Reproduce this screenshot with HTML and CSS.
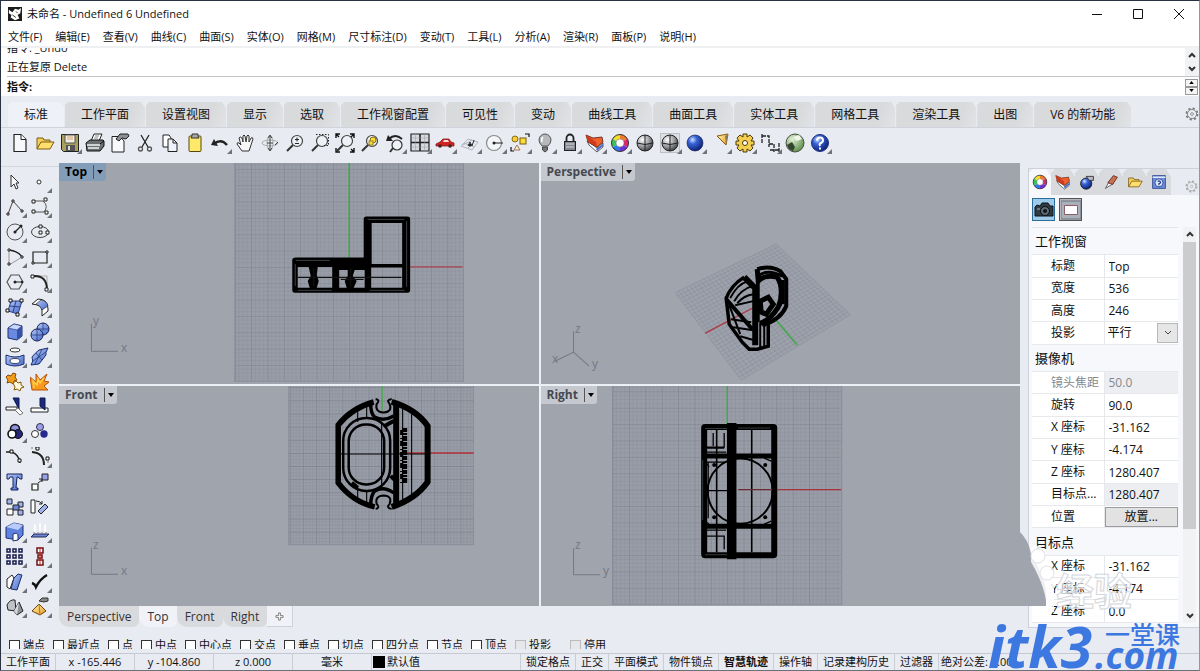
FILE: index.html
```html
<!DOCTYPE html>
<html lang="zh-CN">
<head>
    <meta charset="UTF-8">
    <meta name="viewport" content="width=device-width, initial-scale=1.0">
    <title>未命名 - Undefined 6 Undefined</title>
    <link rel="stylesheet" href="styles.css">
</head>
<body>
    <!-- shared gradients and grid patterns -->
    <svg class="defs" width="0" height="0" aria-hidden="true">
        <defs>
            <radialGradient id="blueBall" cx="35%" cy="30%" r="75%"><stop offset="0" stop-color="#cfe0ff"/><stop offset=".35" stop-color="#3763d6"/><stop offset="1" stop-color="#0b1c6e"/></radialGradient>
            <radialGradient id="grayBall" cx="35%" cy="30%" r="75%"><stop offset="0" stop-color="#fff"/><stop offset=".5" stop-color="#a4a6aa"/><stop offset="1" stop-color="#3c3e42"/></radialGradient>
            <radialGradient id="greenBall" cx="35%" cy="30%" r="75%"><stop offset="0" stop-color="#e2f0d8"/><stop offset="1" stop-color="#5d8c4a"/></radialGradient>
            <linearGradient id="blueFace" x1="0" y1="0" x2="1" y2="1"><stop offset="0" stop-color="#b5c8f6"/><stop offset="1" stop-color="#4468c8"/></linearGradient>
            <linearGradient id="gold" x1="0" y1="0" x2="1" y2="1"><stop offset="0" stop-color="#fff3b0"/><stop offset="1" stop-color="#e89a1c"/></linearGradient>
            <pattern id="gridBig" x="349.5" y="267" width="16.36" height="16.36" patternUnits="userSpaceOnUse">
                <path d="M4.1 0V16.4M8.2 0V16.4M12.3 0V16.4M0 4.1H16.4M0 8.2H16.4M0 12.3H16.4" stroke="#8b8f9a" stroke-width=".6"/>
                <path d="M0 0V16.4M0 0H16.4" stroke="#7b808c" stroke-width="1.2"/>
            </pattern>
            <pattern id="gridRight" x="727" y="489.5" width="16.36" height="16.36" patternUnits="userSpaceOnUse">
                <path d="M4.1 0V16.4M8.2 0V16.4M12.3 0V16.4M0 4.1H16.4M0 8.2H16.4M0 12.3H16.4" stroke="#8b8f9a" stroke-width=".6"/>
                <path d="M0 0V16.4M0 0H16.4" stroke="#7b808c" stroke-width="1.2"/>
            </pattern>
            <pattern id="gridFront" x="382" y="453" width="13.14" height="13.14" patternUnits="userSpaceOnUse">
                <path d="M3.3 0V13.2M6.6 0V13.2M9.9 0V13.2M0 3.3H13.2M0 6.6H13.2M0 9.9H13.2" stroke="#8b8f9a" stroke-width=".6"/>
                <path d="M0 0V13.2M0 0H13.2" stroke="#7b808c" stroke-width="1.2"/>
            </pattern>
            <symbol id="wheel" viewBox="0 0 20 20">
                <g fill="none" stroke-width="5">
                    <path d="M10 4A6 6 0 0 1 15.2 7" stroke="#f07a2a"/><path d="M15.2 7A6 6 0 0 1 15.2 13" stroke="#d82a6a"/>
                    <path d="M15.2 13A6 6 0 0 1 10 16" stroke="#7030d8"/><path d="M10 16A6 6 0 0 1 4.800 13" stroke="#2a7ae8"/>
                    <path d="M4.800 13A6 6 0 0 1 4.800 7" stroke="#3cc45c"/><path d="M4.800 7A6 6 0 0 1 10 4" stroke="#f2dc2c"/>
                </g>
                <circle cx="10" cy="10" r="8.5" fill="none" stroke="#333"/><circle cx="10" cy="10" r="4" fill="#fff" stroke="#666" stroke-width=".5"/>
            </symbol>
            <symbol id="layers" viewBox="0 0 20 20">
                <path d="M2 8L12 15 18 10V14L12 19 4 12Z" fill="#fff" stroke="#333" stroke-width=".8"/>
                <path d="M11 16L18 11V13L12 18Z" fill="#4a68c8"/>
                <path d="M1 2L8 5 17 4 18 9 12 14 3 9Z" fill="#f0602a" stroke="#5b1a10" stroke-width=".8"/>
                <path d="M1 2L3 9 12 14 11 9Z" fill="#cf3a1c"/>
            </symbol>
            <symbol id="folder" viewBox="0 0 20 20">
                <path d="M2 16V5H8L9 7H15V9" fill="#f4cf58" stroke="#7a5a10"/><path d="M2 16L6 9H19L15 16Z" fill="#ffdf6e" stroke="#7a5a10"/>
            </symbol>
            <symbol id="cog" viewBox="0 0 20 20">
                <circle cx="10" cy="10" r="8" fill="none" stroke-width="2.4" stroke-dasharray="3.14"/><circle cx="10" cy="10" r="6.5" fill="none" stroke-width="1.2"/><circle cx="10" cy="10" r="2" fill="none"/>
            </symbol>
            <symbol id="lens" viewBox="0 0 20 20">
                <path d="M8 12L2 18" stroke="#333" stroke-width="2"/><circle cx="12" cy="8" r="5.5" fill="#eef2f7" stroke="#444" stroke-width="1.2"/>
            </symbol>
        </defs>
    </svg>

    <header class="titlebar">
        <svg class="logo" viewBox="0 0 16 16"><path d="M0 0H16V16H0Z" fill="#1c1c1c"/><path d="M1 3L5 6 8 2 12 3 15 1 14 7 11 9 13 13 8 15 3 12 4 9 1 7Z" fill="#fff"/><path d="M5 9L9 12M9 5L11 7M3 13L5 15" stroke="#222"/></svg>
        <h1>未命名 - Undefined 6 Undefined</h1>
        <div class="window-buttons">
            <button aria-label="最小化"><svg viewBox="0 0 12 12"><path d="M1 6.5H11"/></svg></button>
            <button aria-label="最大化"><svg viewBox="0 0 12 12"><path d="M1.5 1.5H10.5V10.5H1.5Z"/></svg></button>
            <button aria-label="关闭"><svg viewBox="0 0 12 12"><path d="M1 1L11 11M11 1L1 11"/></svg></button>
        </div>
    </header>

    <nav class="menu">
        <a href="#">文件(F)</a>
        <a href="#">编辑(E)</a>
        <a href="#">查看(V)</a>
        <a href="#">曲线(C)</a>
        <a href="#">曲面(S)</a>
        <a href="#">实体(O)</a>
        <a href="#">网格(M)</a>
        <a href="#">尺寸标注(D)</a>
        <a href="#">变动(T)</a>
        <a href="#">工具(L)</a>
        <a href="#">分析(A)</a>
        <a href="#">渲染(R)</a>
        <a href="#">面板(P)</a>
        <a href="#">说明(H)</a>
    </nav>

    <section class="command">
        <div class="history">
            <div class="history-lines">
                <p>指令: _Undo</p>
                <p>正在复原 Delete</p>
            </div>
            <div class="history-scroll">
                <svg viewBox="0 0 8 6"><path d="M1 5L4 2 7 5"/></svg>
                <svg viewBox="0 0 8 6"><path d="M1 1L4 4 7 1"/></svg>
            </div>
        </div>
        <div class="prompt">
            <label for="cmd">指令:</label>
            <input type="text" id="cmd">
            <div class="spin">
                <button aria-label="上一个"><svg viewBox="0 0 6 4"><path d="M0 4L3 0 6 4Z"/></svg></button>
                <button aria-label="下一个"><svg viewBox="0 0 6 4"><path d="M0 0L3 4 6 0Z"/></svg></button>
            </div>
        </div>
    </section>

    <nav class="tabs">
        <button class="tab active">标准</button>
        <button class="tab">工作平面</button>
        <button class="tab">设置视图</button>
        <button class="tab">显示</button>
        <button class="tab">选取</button>
        <button class="tab">工作视窗配置</button>
        <button class="tab">可见性</button>
        <button class="tab">变动</button>
        <button class="tab">曲线工具</button>
        <button class="tab">曲面工具</button>
        <button class="tab">实体工具</button>
        <button class="tab">网格工具</button>
        <button class="tab">渲染工具</button>
        <button class="tab">出图</button>
        <button class="tab">V6 的新功能</button>
        <svg class="tabs-cog" viewBox="0 0 20 20"><use href="#cog"/></svg>
    </nav>

    <div class="toolbar">
        <button class="tool" aria-label="新建"><svg viewBox="0 0 20 20"><path d="M4 1.5H11L16 6.5V18.5H4Z" fill="#f6f8fb" stroke="#222" stroke-width="1.2"/><path d="M11 1.5V6.5H16" fill="#fff" stroke="#222"/></svg></button>
        <button class="tool" aria-label="打开"><svg viewBox="0 0 20 20"><use href="#folder"/></svg></button>
        <button class="tool more" aria-label="保存"><svg viewBox="0 0 20 20"><path d="M1.5 1.5H18.5V18.5H3.5L1.5 16.5Z" fill="#a9a05c" stroke="#222"/><path d="M5 2H15V10H5Z" fill="#f1efe6" stroke="#555"/><path d="M7 4H13M7 6H13" stroke="#e0a070"/><path d="M6 12H15V18H6Z" fill="#555"/><path d="M8 13H10V17H8Z" fill="#ddd"/></svg></button>
        <button class="tool" aria-label="打印"><svg viewBox="0 0 20 20"><path d="M6 8L9 1H17L14 8" fill="#fff" stroke="#222"/><path d="M10 3H14M9 5H13" stroke="#888"/><path d="M1 10L5 7H18L19 8V13L15 18H2Z" fill="#6b6e73" stroke="#111"/><path d="M2 12H15M3 15H14" stroke="#f4f4f4" stroke-width="1.4"/><path d="M15 11L19 8" stroke="#111"/></svg></button>
        <button class="tool" aria-label="文件属性"><svg viewBox="0 0 20 20"><path d="M2 3.5H10L14 8V19H2Z" fill="#f8f9fb" stroke="#222"/><path d="M6 6L10 1H18L19 3 16 6 12 5 9 8Z" fill="#8b8e92" stroke="#222"/></svg></button>
        <button class="tool" aria-label="剪切"><svg viewBox="0 0 20 20"><path d="M6 2L13 14M14 2L7 14" stroke="#222" stroke-width="1.3"/><circle cx="5.5" cy="16" r="2" fill="none" stroke="#555" stroke-width="1.3"/><circle cx="14.5" cy="16" r="2" fill="none" stroke="#555" stroke-width="1.3"/></svg></button>
        <button class="tool" aria-label="复制"><svg viewBox="0 0 20 20"><path d="M3 2H9L11 5V14H3Z" fill="#fff" stroke="#222"/><path d="M8 6H13L17 10V18.5H8Z" fill="#eef2fa" stroke="#222"/><path d="M13 6V10H17" fill="none" stroke="#222"/></svg></button>
        <button class="tool" aria-label="粘贴"><svg viewBox="0 0 20 20"><rect x="4" y="3" width="12" height="15.5" rx="1" fill="#ffe96a" stroke="#55480f"/><path d="M7 3V1H13V3L14 5H6Z" fill="#aaa" stroke="#333"/></svg></button>
        <button class="tool more" aria-label="复原"><svg viewBox="0 0 20 20"><path d="M4 11Q11 5 17 12" fill="none" stroke="#222" stroke-width="2.4"/><path d="M1 12L4 6 8 13Z" fill="#222"/></svg></button>
        <button class="tool" aria-label="平移"><svg viewBox="0 0 20 20"><path d="M7 18L2 11Q2 9 4 10L6 12 4 5Q5 3 7 5L8 9 8 3Q9 1 10 3L11 9 12 3Q13 1 14 3L14 9 16 5Q18 4 18 6L15 15 14 18Z" fill="#f7f7f8" stroke="#333"/></svg></button>
        <button class="tool" aria-label="旋转视图"><svg viewBox="0 0 20 20"><ellipse cx="10" cy="10" rx="8" ry="3" fill="none" stroke="#aaa"/><ellipse cx="10" cy="10" rx="3" ry="7" fill="none" stroke="#aaa"/><path d="M10 3V17M8 5L10 2 12 5M8 15L10 18 12 15M15 12L18 9M7 10H13" fill="none" stroke="#444"/></svg></button>
        <button class="tool" aria-label="动态缩放"><svg viewBox="0 0 20 20"><use href="#lens"/><path d="M12 4.5V8.5M10 6.5H14M10 10.5H14" stroke="#222"/></svg></button>
        <button class="tool" aria-label="框选缩放"><svg viewBox="0 0 20 20"><use href="#lens"/><path d="M6 1.5H18.5V12.5H14" fill="none" stroke="#222" stroke-dasharray="1.5"/></svg></button>
        <button class="tool" aria-label="缩放至最大范围"><svg viewBox="0 0 20 20"><use href="#lens"/><path d="M1 5V1H5M15 1H19V5M19 15V19H15M5 19H1V15M1 1L4 4M19 1L16 4M19 19L16 16" fill="none" stroke="#111" stroke-width="1.4"/></svg></button>
        <button class="tool" aria-label="缩放至选取物件"><svg viewBox="0 0 20 20"><use href="#lens"/><circle cx="13" cy="7" r="3" fill="#f7dc3c" stroke="#8a7010"/><rect x="9" y="8" width="4" height="4" fill="#f7dc3c" stroke="#8a7010" stroke-width=".8"/></svg></button>
        <button class="tool more" aria-label="复原视图"><svg viewBox="0 0 20 20"><circle cx="12" cy="12" r="5" fill="#eef2f7" stroke="#333" stroke-width="1.2"/><path d="M8 15L5 19" stroke="#333" stroke-width="2"/><path d="M4 6Q10 0 17 6" fill="none" stroke="#222" stroke-width="2"/><path d="M1 8L3 2 8 8Z" fill="#222"/></svg></button>
        <button class="tool more" aria-label="四个工作视窗"><svg viewBox="0 0 20 20"><path d="M1 1H19V18H1Z" fill="#d6d9df" stroke="#222" stroke-width="1.2"/><path d="M10 1V18M1 9.5H19" stroke="#222" stroke-width="1.6"/><path d="M5.5 1V18M14.5 1V18M1 5H19M1 14H19" stroke="#999" stroke-width=".5"/></svg></button>
        <button class="tool more" aria-label="设置"><svg viewBox="0 0 20 20"><path d="M1 11L5 9 8 6H14L16 9 19 10V13H1Z" fill="#cf2222" stroke="#8a1c1c" stroke-width=".8"/><path d="M8 9L9 7H13L14 9Z" fill="#f6dede"/><circle cx="5" cy="13" r="1.8" fill="#422"/><circle cx="15" cy="13" r="1.8" fill="#422"/></svg></button>
        <button class="tool more" aria-label="工作平面"><svg viewBox="0 0 20 20"><path d="M1 13L8 6 18 9 12 17ZM4 10L14 14M3 12L12 7M8 15L15 8" fill="none" stroke="#b0b3b9"/><path d="M8 13L10 9 12 13 14 7" fill="none" stroke="#333"/><circle cx="10" cy="12" r="1.5" fill="#222"/></svg></button>
        <button class="tool more" aria-label="设置视图"><svg viewBox="0 0 20 20"><circle cx="9" cy="10" r="7.5" fill="#f4f5f8" stroke="#888" stroke-width="1.2"/><path d="M9 10H18" stroke="#222"/><circle cx="9" cy="10" r="1.5" fill="#222"/></svg></button>
        <button class="tool more" aria-label="选取"><svg viewBox="0 0 20 20"><circle cx="5" cy="6" r="3" fill="#f7cf35" stroke="#8a6a10"/><rect x="10" y="5" width="6" height="6" fill="#f9dd3a" stroke="#7a5a10"/><path d="M4 17L7 12 10 17Z" fill="#f6ece0" stroke="#a6764a"/><path d="M15 1H19V4M1 14V18H4" fill="none" stroke="#111" stroke-width="1.2"/></svg></button>
        <button class="tool more" aria-label="隐藏"><svg viewBox="0 0 20 20"><path d="M7 13Q4 10 4 7A6 6 0 0 1 16 7Q16 10 13 13Z" fill="#b6b8bc" stroke="#555"/><path d="M8 4Q6 6 7 9" stroke="#fff" stroke-width="1.5" fill="none"/><path d="M7.5 14H12.5V17L10 19 7.5 17Z" fill="#777" stroke="#444"/></svg></button>
        <button class="tool more" aria-label="锁定"><svg viewBox="0 0 20 20"><path d="M6.5 9V5A3.5 3.5 0 0 1 13.5 5V9" fill="none" stroke="#222" stroke-width="1.8"/><rect x="4.5" y="8.5" width="11" height="9" fill="#85888e" stroke="#222"/><path d="M6 11H14M6 14H14" stroke="#d6d8dc"/></svg></button>
        <button class="tool more" aria-label="图层"><svg viewBox="0 0 20 20"><use href="#layers"/></svg></button>
        <button class="tool more" aria-label="物件属性"><svg viewBox="0 0 20 20"><use href="#wheel"/></svg></button>
        <button class="tool" aria-label="着色"><svg viewBox="0 0 20 20"><circle cx="10" cy="10" r="8" fill="url(#grayBall)" stroke="#222"/><path d="M10 2V18M2 10Q10 13 18 10" fill="none" stroke="#222"/></svg></button>
        <button class="tool more" aria-label="着色模式"><svg viewBox="0 0 20 20"><path d="M.5 .5H19.5V19.5H.5Z" fill="#dcdfe4" stroke="#999" stroke-dasharray="1"/><circle cx="10" cy="10" r="8" fill="url(#grayBall)" stroke="#222"/><path d="M10 2V18M2 10Q10 13 18 10" fill="none" stroke="#222"/></svg></button>
        <button class="tool more" aria-label="渲染"><svg viewBox="0 0 20 20"><circle cx="10" cy="10" r="8" fill="url(#blueBall)" stroke="#0b1a50" stroke-width=".6"/></svg></button>
        <button class="tool more" aria-label="灯光"><svg viewBox="0 0 20 20"><path d="M7 3L18 1 16 12Z" fill="url(#gold)" stroke="#8a5a10"/><path d="M16 12L18 1 15 3Z" fill="#8d7c5c"/></svg></button>
        <button class="tool more" aria-label="选项"><svg viewBox="0 0 20 20"><path d="M8 1H12V4L15 2 18 5 16 8H19V12H16L18 15 15 18 12 16V19H8V16L5 18 2 15 4 12H1V8H4L2 5 5 2 8 4Z" fill="#f3cf4d" stroke="#4a3808"/><circle cx="10" cy="10" r="2.5" fill="#fff" stroke="#4a3808"/></svg></button>
        <button class="tool more" aria-label="尺寸标注"><svg viewBox="0 0 20 20"><path d="M2 1V11M2 3H9V11H14V19M9 11V14M19 10V19M10 17H19" fill="none" stroke="#222" stroke-width="1.3" stroke-dasharray="4 1"/></svg></button>
        <button class="tool" aria-label="地球"><svg viewBox="0 0 20 20"><circle cx="10" cy="10" r="9" fill="url(#greenBall)" stroke="#46513f"/><path d="M2 12L7 9 10 14 8 18 4 16Z" fill="#35462f"/><path d="M8 4L14 2 17 6 12 8Z" fill="#f0f7ea"/></svg></button>
        <button class="tool more" aria-label="说明"><svg viewBox="0 0 20 20"><circle cx="10" cy="10" r="8.5" fill="url(#blueBall)" stroke="#1e2f80"/><path d="M7 7.5Q7 4.5 10 4.5T13 7.5Q13 9 11 10T10 13M10 14.5V16.5" fill="none" stroke="#fff" stroke-width="2"/></svg></button>
    </div>

    <main class="workspace">
        <aside class="sidebar">
            <button class="tool" aria-label="取消选取"><svg viewBox="0 0 20 20"><path d="M6 3V15L9 12 11 17 13 16 11 11H14Z" fill="#f6f7fa" stroke="#333"/></svg></button>
            <button class="tool more" aria-label="点"><svg viewBox="0 0 20 20"><circle cx="9" cy="10" r="2" fill="#fff" stroke="#333"/></svg></button>
            <button class="tool more" aria-label="多重直线"><svg viewBox="0 0 20 20"><path d="M3 17L8 4 17 14" fill="none" stroke="#444"/><path d="M2 16H4V18H2ZM7 3H9V5H7ZM16 13H18V15H16Z" fill="#fff" stroke="#222"/></svg></button>
            <button class="tool more" aria-label="控制点曲线"><svg viewBox="0 0 20 20"><path d="M4 4H13Q19 9 14 15H4" fill="none" stroke="#555"/><path d="M2 3H5V6H2ZM14 1H17V4H14ZM2 13H5V16H2ZM15 14H18V17H15Z" fill="#fff" stroke="#222"/></svg></button>
            <button class="tool more" aria-label="圆"><svg viewBox="0 0 20 20"><circle cx="10" cy="10" r="8" fill="none" stroke="#555"/><path d="M10 10L15 5" stroke="#222" stroke-width="1.3"/><circle cx="10" cy="10" r="1.5" fill="#222"/><circle cx="16" cy="4" r="1.5" fill="#222"/></svg></button>
            <button class="tool more" aria-label="椭圆"><svg viewBox="0 0 20 20"><ellipse cx="10" cy="10" rx="8.5" ry="5.5" fill="none" stroke="#444"/><path d="M9 3H12V6H9ZM9 9H12V12H9ZM16 9H19V12H16Z" fill="#fff" stroke="#222"/></svg></button>
            <button class="tool more" aria-label="圆弧"><svg viewBox="0 0 20 20"><path d="M4 3Q13 4 17 10" fill="none" stroke="#222" stroke-width="1.3"/><path d="M4 3V18L17 10" fill="none" stroke="#999"/><path d="M3 2H5V4H3ZM3 16H5V18H3ZM16 9H18V11H16Z" fill="#fff" stroke="#222"/></svg></button>
            <button class="tool more" aria-label="矩形"><svg viewBox="0 0 20 20"><path d="M3 5H17V16H3Z" fill="none" stroke="#222" stroke-width="1.2"/><path d="M16 4H18V6H16ZM2 15H4V17H2Z" fill="#fff" stroke="#222"/></svg></button>
            <button class="tool more" aria-label="多边形"><svg viewBox="0 0 20 20"><path d="M6 3H14L18 10 14 17H6L2 10Z" fill="none" stroke="#555" stroke-width="1.2"/><path d="M10 10H18" stroke="#222"/><circle cx="10" cy="10" r="1.5" fill="#222"/><circle cx="17" cy="10" r="1.2" fill="#222"/></svg></button>
            <button class="tool more" aria-label="曲线圆角"><svg viewBox="0 0 20 20"><path d="M3 4H17V18" fill="none" stroke="#aaa"/><path d="M3 4Q17 3 17 18" fill="none" stroke="#222" stroke-width="2"/><path d="M1 3H4V6H1ZM15 16H18V19H15Z" fill="#fff" stroke="#222"/></svg></button>
            <button class="tool more" aria-label="曲面"><svg viewBox="0 0 20 20"><path d="M6 4H17L13 17 3 14Z" fill="url(#blueFace)" stroke="#2b3f8c"/><path d="M11 4L8 15M4 9L15 10" stroke="#2b3f8c"/><path d="M4 2H7V5H4ZM15 2H18V5H15ZM1 12H4V15H1ZM11 16H14V19H11Z" fill="#fff" stroke="#111"/></svg></button>
            <button class="tool more" aria-label="挤出曲面"><svg viewBox="0 0 20 20"><path d="M2 7L8 2Q18 2 18 12V14L12 19V13Q12 8 2 7Z" fill="#fff" stroke="#222"/><path d="M6 7L11 3Q17 4 18 9L12 13Q11 9 6 7Z" fill="url(#blueFace)" stroke="#222" stroke-width=".6"/></svg></button>
            <button class="tool more" aria-label="立方体"><svg viewBox="0 0 20 20"><path d="M3 6L9 2 17 4V14L12 18 3 16Z" fill="#6a8ae2" stroke="#1d2f70"/><path d="M3 6L9 2 17 4 12 8Z" fill="#c9d7fa" stroke="#1d2f70" stroke-width=".6"/><path d="M12 8L17 4V14L12 18Z" fill="#3553ab"/></svg></button>
            <button class="tool more" aria-label="布尔运算"><svg viewBox="0 0 20 20"><circle cx="13" cy="7" r="6" fill="url(#blueFace)" stroke="#111c50"/><circle cx="7" cy="13" r="6" fill="url(#blueFace)" stroke="#111c50"/><path d="M7 7V19M1 13H13M13 1V9M8 7H19" stroke="#2a3c88" stroke-width=".8"/></svg></button>
            <button class="tool more" aria-label="投影曲线"><svg viewBox="0 0 20 20"><ellipse cx="10" cy="3" rx="5" ry="2" fill="#fff" stroke="#333"/><path d="M1 8Q10 12 19 8V17Q10 21 1 17Z" fill="url(#blueFace)" stroke="#1d2f70"/><ellipse cx="10" cy="14" rx="5" ry="2.5" fill="#fff" stroke="#446"/></svg></button>
            <button class="tool more" aria-label="网格"><svg viewBox="0 0 20 20"><path d="M2 10Q5 6 9 3L18 1Q15 6 16 8L9 17 1 18Q4 14 2 10Z" fill="url(#blueFace)" stroke="#1d2f70"/><path d="M6 6L12 13M3 14L16 5M12 2L5 17" fill="none" stroke="#24367c" stroke-width=".8"/></svg></button>
            <button class="tool" aria-label="组合"><svg viewBox="0 0 20 20"><path d="M1 5L3 3 6 4 8 1 11 2 10 5 12 8 9 9 8 12 5 10 2 11 3 8Z" fill="#f29c1c" stroke="#8a4a05"/><path d="M8 11L11 9 13 11 16 10 16 13 19 15 16 16 15 19 12 17 9 18 10 15Z" fill="#fff8de" stroke="#8a5a05"/></svg></button>
            <button class="tool" aria-label="炸开"><svg viewBox="0 0 20 20"><path d="M2 18L0 5 6 10 6 2 10 8 17 2 14 9 19 10 14 14 18 18Z" fill="#f8981d" stroke="#b4520a"/><path d="M4 16L3 9 7 13 8 7 10 11 14 6" fill="none" stroke="#ffd04a" stroke-width="1.5"/></svg></button>
            <button class="tool" aria-label="修剪"><svg viewBox="0 0 20 20"><path d="M1 10H12V13H1Z" fill="#fff" stroke="#222"/><path d="M14 1V12L8 1Z" fill="#1a2a80" stroke="#0e1850"/><path d="M10 13L13 11 18 16 15 18Z" fill="#fff" stroke="#777"/></svg></button>
            <button class="tool" aria-label="分割"><svg viewBox="0 0 20 20"><path d="M1 11H18V15H1Z" fill="#fff" stroke="#222"/><path d="M15 1V13L10 9V1Z" fill="#1a2a80" stroke="#0e1850"/></svg></button>
            <button class="tool more" aria-label="群组"><svg viewBox="0 0 20 20"><circle cx="10" cy="7" r="4.5" fill="#8b93e0" stroke="#111" stroke-width="1.6"/><circle cx="13" cy="12" r="4.5" fill="#26287c" stroke="#111"/><circle cx="7" cy="12" r="4" fill="#fff" stroke="#111" stroke-width="1.6"/></svg></button>
            <button class="tool" aria-label="解散群组"><svg viewBox="0 0 20 20"><circle cx="10" cy="5" r="3.5" fill="#9aa0ea" stroke="#334"/><circle cx="5" cy="12" r="3.5" fill="#fff" stroke="#333"/><circle cx="14" cy="12" r="3.7" fill="#26288c"/></svg></button>
            <button class="tool" aria-label="编辑控制点"><svg viewBox="0 0 20 20"><path d="M1 5H6Q14 7 15 16" fill="none" stroke="#222" stroke-width="1.4"/><path d="M5 3H8V6H5ZM13 12H16V15H13Z" fill="#fff" stroke="#111"/></svg></button>
            <button class="tool more" aria-label="打开点"><svg viewBox="0 0 20 20"><path d="M2 5Q14 6 14 18" fill="none" stroke="#222" stroke-width="2"/><path d="M1 1H8M18 10V18" stroke="#777" stroke-dasharray="2"/><path d="M6 0H9V3H6ZM16 10H19V13H16Z" fill="#fff" stroke="#111"/></svg></button>
            <button class="tool" aria-label="文字"><svg viewBox="0 0 20 20"><path d="M2 2H17V7H15L13 5H12L11 16H13V18H6V16H8V5H5L4 7H2Z" fill="url(#blueFace)" stroke="#15245e"/></svg></button>
            <button class="tool more" aria-label="移动"><svg viewBox="0 0 20 20"><path d="M12 2H18V8H12Z" fill="#9aa0ea" stroke="#222"/><path d="M2 12H8V18H2Z" fill="#fff" stroke="#222" stroke-width="1.2"/><path d="M8 11L12 8M9 7H12V10" fill="none" stroke="#222"/></svg></button>
            <button class="tool" aria-label="阵列复制"><svg viewBox="0 0 20 20"><path d="M2 2H7V7H2ZM13 5H18V10H13ZM13 13H18V18H13Z" fill="#9fb2ee" stroke="#222"/><path d="M2 12H8V18H2Z" fill="#fff" stroke="#222"/><path d="M8 8H14V13H8Z" fill="#6d86dc" stroke="#222"/></svg></button>
            <button class="tool" aria-label="旋转"><svg viewBox="0 0 20 20"><path d="M1 3H5V16H1Z" fill="#fff" stroke="#222"/><path d="M8 14L15 7 18 10 11 17Z" fill="#9fb2ee" stroke="#222"/><path d="M6 4Q10 4 12 7M9 7H12V4" fill="none" stroke="#222"/></svg></button>
            <button class="tool more" aria-label="实体工具"><svg viewBox="0 0 20 20"><path d="M1 5L9 1 18 3V13L13 18 1 16Z" fill="#5f82de" stroke="#1d2f70"/><path d="M1 5L9 1 18 3 13 8Z" fill="#b9cbf8"/><path d="M8 19V12Q13 10 13 14V18Z" fill="#fff" stroke="#1d2f70"/></svg></button>
            <button class="tool more" aria-label="投影至平面"><svg viewBox="0 0 20 20"><path d="M5 2V9M10 1V9M15 2V9M4 7L5 9 6 7M14 7L15 9 16 7" fill="none" stroke="#fff" stroke-width="1.5"/><path d="M1 15L4 12H19L16 15Z" fill="#6f86d4" stroke="#222a5a"/><path d="M3 11H17" stroke="#888" stroke-dasharray="2"/></svg></button>
            <button class="tool more" aria-label="阵列"><svg viewBox="0 0 20 20"><path d="M2 2H5V5H2ZM8 2H11V5H8ZM14 2H17V5H14ZM2 8H5V11H2ZM8 8H11V11H8ZM14 8H17V11H14ZM2 14H5V17H2ZM8 14H11V17H8ZM14 14H17V17H14Z" fill="#fff" stroke="#191c4c" stroke-width="1.5"/></svg></button>
            <button class="tool more" aria-label="对齐"><svg viewBox="0 0 20 20"><path d="M7 1H13V6H7ZM7 13H13V18H7ZM8 8H12V11H8Z" fill="#fff" stroke="#651515" stroke-width="1.5"/><path d="M10 0V19" stroke="#d01818"/></svg></button>
            <button class="tool more" aria-label="变形"><svg viewBox="0 0 20 20"><path d="M2 7L7 3 9 6 5 17 2 15Z" fill="#fff" stroke="#222"/><path d="M9 6L13 2 17 3 12 18 6 17Z" fill="url(#blueFace)" stroke="#1d2f70"/></svg></button>
            <button class="tool more" aria-label="检查"><svg viewBox="0 0 20 20"><path d="M2 11Q5 12 6 15Q10 7 17 3" fill="none" stroke="#111" stroke-width="2.4"/></svg></button>
            <button class="tool more" aria-label="网格实体"><svg viewBox="0 0 20 20"><path d="M2 8Q5 2 10 3L11 14 3 13Z" fill="#bfc2c7" stroke="#222"/><path d="M14 5L18 14 12 18 9 14Z" fill="#8e9197" stroke="#222"/><path d="M14 5L12 18 9 14Z" fill="#d5d7db"/></svg></button>
            <button class="tool more" aria-label="着色网格"><svg viewBox="0 0 20 20"><path d="M9 7L16 14 10 18 2 14Z" fill="url(#gold)" stroke="#6b430a"/><path d="M9 7L10 18" stroke="#b8741a"/><path d="M9 4L12 1H18V4L14 5Z" fill="#888" stroke="#333"/></svg></button>
        </aside>

        <section class="views">
            <div class="viewport-grid">
                <div class="viewport current">
                    <svg class="scene" viewBox="59 163 480 221" preserveAspectRatio="xMinYMin slice">
                        <rect x="235" y="152.5" width="229" height="229" fill="#999da7"/>
                        <rect x="235" y="152.5" width="229" height="229" fill="url(#gridBig)" stroke="#878b97" stroke-width=".8"/>
                        <path d="M349.5 163V260" stroke="#2fae3c" stroke-width="1.4"/>
                        <path d="M408 267H463" stroke="#a8434f" stroke-width="1.3"/>
                        <path fill-rule="evenodd" d="M296 257.5H364V219Q364 216.5 366.5 216.5H408Q410.5 216.5 410.5 219V290Q410.5 293 408 293H295Q292.5 293 292.5 290V260Q292.5 257.5 296 257.5ZM372 223V264H402.5V223ZM371.5 267.5V288H402.5V267.5ZM298 267V288H310L308 281 311 276 309 267ZM318 267L317 275 319 281 317 288H332.5V267ZM339.5 270V288H347L345 281 348 276V270ZM355 270L353 276 357 281 354 288H365V270Z"/>
                        <path d="M298 277.5H402M341 279.5H364M314 268V287M351 268V287" fill="none" stroke="#111" stroke-width="1.2"/>
                        <path d="M368 219.5H405M407 221V287M298 290.5H332M370 290.5H405M295.5 264V286M296 260.5H330" fill="none" stroke="#676b74" stroke-width=".6"/>
                        <g class="axis"><path d="M91.5 324V351.5H118"/><text x="93" y="325">y</text><text x="121" y="352">x</text></g>
                    </svg>
                    <div class="viewport-title"><button>Top</button><button aria-label="Top 菜单"><svg viewBox="0 0 6 4"><path d="M0 0H6L3 4Z"/></svg></button></div>
                </div>
                <div class="viewport">
                    <svg class="scene" viewBox="541 163 479 221" preserveAspectRatio="xMinYMin slice">
                        <path d="M675 292.5L776 244 850 314.5 741 380Z" fill="#9da1ab"/>
                        <path id="perspGrid" fill="none" stroke="#868a96" stroke-width=".5"/>
                        <path d="M705 333L756 306" stroke="#a8434f" stroke-width="1.6"/>
                        <path d="M769 312L797 345" stroke="#43a84c" stroke-width="1.6"/>
                        <g fill="none" stroke="#000">
                            <!-- left shell -->
                            <path d="M744 277Q731 285 726 298L729 324 742 342 749 349H757L768 346V322" stroke-width="3.5"/>
                            <path d="M744 277L755 288V345" stroke-width="6"/>
                            <path d="M726 299L752 329" stroke-width="4"/>
                            <path d="M730 298Q737 284 748 281M734 301Q741 289 752 286M737 303Q744 295 753 294M735 305L753 301M729 305L740 334M731 319L751 322M733 327L753 330M740 336L754 340M760 322V348M764 322V347" stroke-width="2"/>
                            <!-- right ring -->
                            <path d="M757 269Q770 265 780 271L786 279V306Q780 320 762 325" stroke-width="4"/>
                            <path d="M757 269L758 281Q764 274 777 277Q785 290 778 307Q770 320 760 323" stroke-width="5"/>
                            <path d="M759 275Q768 269 782 276M758 280V322" stroke-width="3"/>
                            <path d="M760 301L768 297 773 304 766 314 761 312Z" stroke-width="5"/>
                            <path d="M780 280V306M783 280V304" stroke-width="3"/>
                        </g>
                        <g class="axis"><path d="M573.5 331V352L555 361M573.5 352L589 366"/><text x="575" y="333">z</text><text x="552" y="363">x</text><text x="592" y="368">y</text></g>
                    </svg>
                    <div class="viewport-title"><button>Perspective</button><button aria-label="Perspective 菜单"><svg viewBox="0 0 6 4"><path d="M0 0H6L3 4Z"/></svg></button></div>
                </div>
                <div class="viewport">
                    <svg class="scene" viewBox="59 386 480 221" preserveAspectRatio="xMinYMin slice">
                        <rect x="289" y="361" width="185" height="184" fill="#999da7"/>
                        <rect x="289" y="361" width="185" height="184" fill="url(#gridFront)" stroke="#878b97" stroke-width=".8"/>
                        <path d="M382.5 386V410" stroke="#4aa854" stroke-width="1.4"/>
                        <path d="M400 453H474" stroke="#b03038" stroke-width="1.4"/>
                        <g fill="none" stroke="#000">
                            <path d="M374 402Q352 408 338.5 425V483Q353 502 375 507" stroke-width="5.5"/>
                            <path d="M392 402Q416 409 428 426V482Q416 499 392 507" stroke-width="6"/>
                            <path d="M396.5 402V507" stroke-width="6"/>
                            <path d="M371 403Q371 414 375 417Q384 422 394 416M371 506Q371 495 375 491Q384 486 394 493" stroke-width="3.5"/>
                            <path d="M376 399Q381 400 377 404Q375 412 384 412.5Q393 412 390 404Q386 400 392 399M376 509Q381 508 377 504Q375 496 384 495.5Q393 496 390 504Q386 508 392 509" stroke-width="2"/>
                            <rect x="343.5" y="418" width="47" height="73" rx="23" stroke-width="2.5"/>
                            <rect x="349" y="424.5" width="35.5" height="60" rx="17" stroke-width="2.5"/>
                            <path d="M336 454H426M358 407V422M367 403V419M358 487V500M367 490V505M412 411V498M403 405V503M382 422V487" stroke-width="1.1"/>
                            <path d="M385 426L394 421M391 476L395 480M352 483L358 488" stroke-width="4"/>
                            <path d="M405 428V484" stroke-width="5" stroke-dasharray="4 1 2 1 5 1"/>
                            <path d="M402 430V484" stroke-width="3" stroke-dasharray="5 3 1 2"/>
                        </g>
                        <g class="axis"><path d="M91.5 548V574.5H118"/><text x="93" y="549">z</text><text x="121" y="575">x</text></g>
                    </svg>
                    <div class="viewport-title"><button>Front</button><button aria-label="Front 菜单"><svg viewBox="0 0 6 4"><path d="M0 0H6L3 4Z"/></svg></button></div>
                </div>
                <div class="viewport">
                    <svg class="scene" viewBox="541 386 479 221" preserveAspectRatio="xMinYMin slice">
                        <rect x="612.5" y="375" width="229" height="229" fill="#999da7"/>
                        <rect x="612.5" y="375" width="229" height="229" fill="url(#gridRight)" stroke="#878b97" stroke-width=".8"/>
                        <path d="M727 386V424" stroke="#43a84c" stroke-width="1.4"/>
                        <path d="M777 489.5H841" stroke="#a8333c" stroke-width="1.4"/>
                        <g fill="none" stroke="#000">
                            <rect x="704" y="427" width="70" height="128" rx="1" stroke-width="6"/>
                            <path d="M731.5 423V559" stroke-width="9.5"/>
                            <path d="M702 456H776M702 526H776" stroke-width="5"/>
                            <circle cx="740" cy="491" r="32.5" stroke-width="2"/>
                            <path d="M751.5 430V552M716.5 430V552" stroke-width="1.6"/>
                            <path d="M705 448H724M724 433V447H706M713 433V446M705 452H726M706 462H726M706 530H726M706 536H724V549M708 490.5H727M704 461L709 467M771 461L764 458M771 521L764 524M704 520L710 525M708 462V518" stroke-width="1.3"/>
                        </g>
                        <circle cx="714" cy="465" r="2"/><circle cx="765" cy="465" r="2"/><circle cx="714" cy="517" r="2"/><circle cx="765" cy="517" r="2"/>
                        <path d="M738 489.5H772" stroke="#6d2a30" stroke-width="1.4"/>
                        <path d="M705 428.5H727M705 554.5H727M738 428H770M702.5 460V520" stroke="#5b5f68" stroke-width=".6"/>
                        <g class="axis"><path d="M573.5 548V574.5H600"/><text x="575" y="549">z</text><text x="603" y="575">y</text></g>
                    </svg>
                    <div class="viewport-title"><button>Right</button><button aria-label="Right 菜单"><svg viewBox="0 0 6 4"><path d="M0 0H6L3 4Z"/></svg></button></div>
                </div>
            </div>
            <nav class="view-tabs">
                <button>Perspective</button>
                <button class="active">Top</button>
                <button>Front</button>
                <button>Right</button>
                <button class="add" aria-label="新建工作视窗"><svg viewBox="0 0 10 10"><path d="M4 1H6V4H9V6H6V9H4V6H1V4H4Z"/></svg></button>
            </nav>
        </section>

        <aside class="panel">
            <div class="panel-tabs">
                <button class="active" aria-label="属性"><svg viewBox="0 0 20 20"><use href="#wheel"/></svg></button>
                <button aria-label="图层"><svg viewBox="0 0 20 20"><use href="#layers"/></svg></button>
                <button aria-label="渲染"><svg viewBox="0 0 20 20"><circle cx="9" cy="12" r="7" fill="url(#blueBall)" stroke="#111"/><path d="M9 3H18V8H13Z" fill="#b9bcc4" stroke="#222"/></svg></button>
                <button aria-label="材质"><svg viewBox="0 0 20 20"><path d="M3 18L8 9 13 12Z" fill="#fff" stroke="#444"/><path d="M6 11L13 2 18 4 12 13Z" fill="#c9714c" stroke="#522"/></svg></button>
                <button aria-label="图库"><svg viewBox="0 0 20 20"><use href="#folder"/></svg></button>
                <button aria-label="说明"><svg viewBox="0 0 20 20"><path d="M2 2H18V18H2Z" fill="#6c8bd8" stroke="#26408c"/><path d="M2 4H18" stroke="#dfe7fb" stroke-width="2"/><circle cx="10" cy="11" r="5" fill="#dbe5fb" stroke="#26408c"/><path d="M8.5 9.5Q10 7.5 11.5 9.5T10 12V14" fill="none" stroke="#26408c" stroke-width="1.5"/></svg></button>
                <svg class="panel-cog" viewBox="0 0 20 20"><use href="#cog"/></svg>
            </div>
            <div class="panel-modes">
                <button class="active" aria-label="摄像机"><svg viewBox="0 0 20 20"><path d="M1 7L3 5 6 6 8 3H14L16 6H19V16H1Z" fill="#2f3a42" stroke="#0d1418"/><circle cx="11" cy="11" r="4.5" fill="#5b6b76" stroke="#0b0f12"/><circle cx="11" cy="11" r="2" fill="#11181c"/><path d="M3 9H6" stroke="#9fb2bf"/></svg></button>
                <button aria-label="工作视窗"><svg viewBox="0 0 20 20"><path d="M0 1H20V19H0Z" fill="#a9b0ba" stroke="#6c727b"/><path d="M3.5 5.5H16.5V14.5H3.5Z" fill="#fff" stroke="#8c5f66"/></svg></button>
            </div>
            <div class="properties">
                <table>
                    <tr class="group"><th colspan="2">工作视窗</th></tr>
                    <tr><th><label for="p-title">标题</label></th><td><input id="p-title" value="Top"></td></tr>
                    <tr><th><label for="p-width">宽度</label></th><td><input id="p-width" value="536"></td></tr>
                    <tr><th><label for="p-height">高度</label></th><td><input id="p-height" value="246"></td></tr>
                    <tr><th><label for="p-proj">投影</label></th><td>
                        <div class="select"><select id="p-proj"><option>平行</option><option>透视</option></select><span><svg viewBox="0 0 8 6"><path d="M1 1L4 4 7 1"/></svg></span></div>
                    </td></tr>
                    <tr class="group"><th colspan="2">摄像机</th></tr>
                    <tr class="off"><th><label for="p-lens">镜头焦距</label></th><td><input id="p-lens" value="50.0" disabled></td></tr>
                    <tr><th><label for="p-rot">旋转</label></th><td><input id="p-rot" value="90.0"></td></tr>
                    <tr><th><label for="p-cx">X 座标</label></th><td><input id="p-cx" value="-31.162"></td></tr>
                    <tr><th><label for="p-cy">Y 座标</label></th><td><input id="p-cy" value="-4.174"></td></tr>
                    <tr><th><label for="p-cz">Z 座标</label></th><td><input id="p-cz" value="1280.407"></td></tr>
                    <tr class="readonly"><th><label for="p-dist">目标点...</label></th><td><input id="p-dist" value="1280.407" readonly></td></tr>
                    <tr><th><label for="p-place">位置</label></th><td><button id="p-place">放置...</button></td></tr>
                    <tr class="group"><th colspan="2">目标点</th></tr>
                    <tr><th><label for="p-tx">X 座标</label></th><td><input id="p-tx" value="-31.162"></td></tr>
                    <tr><th><label for="p-ty">Y 座标</label></th><td><input id="p-ty" value="-4.174"></td></tr>
                    <tr><th><label for="p-tz">Z 座标</label></th><td><input id="p-tz" value="0.0"></td></tr>
                </table>
                <div class="scrollbar">
                    <svg viewBox="0 0 8 6"><path d="M1 5L4 2 7 5"/></svg>
                    <div class="thumb"></div>
                    <svg viewBox="0 0 8 6"><path d="M1 1L4 4 7 1"/></svg>
                </div>
            </div>
        </aside>
    </main>

    <div class="osnap">
        <label><input type="checkbox">端点</label>
        <label><input type="checkbox">最近点</label>
        <label><input type="checkbox">点</label>
        <label><input type="checkbox">中点</label>
        <label><input type="checkbox">中心点</label>
        <label><input type="checkbox">交点</label>
        <label><input type="checkbox">垂点</label>
        <label><input type="checkbox">切点</label>
        <label><input type="checkbox">四分点</label>
        <label><input type="checkbox">节点</label>
        <label><input type="checkbox">顶点</label>
        <label class="wide"><input type="checkbox" disabled>投影</label>
        <label><input type="checkbox" disabled>停用</label>
    </div>

    <footer class="status">
        <span class="plane">工作平面</span>
        <span class="coord">x -165.446</span>
        <span class="coord">y -104.860</span>
        <span class="coord">z 0.000</span>
        <span class="coord">毫米</span>
        <span class="layer"><i></i>默认值</span>
        <button>锁定格点</button>
        <button>正交</button>
        <button>平面模式</button>
        <button>物件锁点</button>
        <button class="on">智慧轨迹</button>
        <button>操作轴</button>
        <button>记录建构历史</button>
        <button>过滤器</button>
        <span class="tolerance">绝对公差: 0.001</span>
    </footer>

    <svg class="watermark" viewBox="1010 530 190 141">
        <path d="M1018 530Q1029 540 1031 554Q1043 575 1046 590V606H1018Z" fill="#a0a4ad"/>
        <path d="M1031 550Q1032 545 1038 546Q1046 548 1045 556Q1044 562 1040 563Q1049 566 1049 572L1054 584V612H1047Q1047 589 1031 562Z" fill="#fdfdfe" opacity=".85"/>
        <g fill="#fff" stroke="#dfe1e5" stroke-width="1"><circle cx="1038" cy="556" r="7"/><circle cx="1047" cy="573" r="7" fill-opacity=".7"/></g>
        <text class="mark-ghost" x="1056" y="605">经验</text>
        <text class="mark-big" x="988" y="668">itk3</text>
        <text class="mark-cjk" x="1105" y="644">一堂课</text>
        <text class="mark-com" x="1095" y="669">.com</text>
    </svg>

    <script src="script.js"></script>
</body>
</html>
```

FILE: styles.css
```css
* {
    box-sizing: border-box;
}

body {
    display: flex;
    flex-direction: column;
    height: 100vh;
    margin: 0;
    overflow: hidden;
    position: relative;
    font-family: "Open Sans", "Noto Sans CJK SC", sans-serif;
    font-size: 12px;
    line-height: 16px;
    color: #111;
    background-color: #e8ebf1;
    border: 1px solid #2a3140;
    border-right-color: #8d97a8;
    border-bottom-color: #6b7078;
}

button, input, select {
    font: inherit;
    color: inherit;
    margin: 0;
    padding: 0;
    border: none;
    background: none;
}

.defs {
    position: absolute;
}

/* title bar and menu */
.titlebar {
    display: flex;
    align-items: center;
    gap: 5px;
    height: 26px;
    padding-left: 7px;
    background-color: #fff;
    font-size: 11px;
}

.titlebar h1 {
    flex: 1;
    margin: 0;
    font-size: 11px;
    font-weight: normal;
}

.logo {
    width: 14px;
    height: 14px;
}

.window-buttons {
    display: flex;
}

.window-buttons button {
    display: flex;
    justify-content: center;
    width: 41px;
}

.window-buttons svg {
    width: 12px;
    height: 12px;
    fill: none;
    stroke: #111;
}

.menu {
    display: flex;
    gap: 13px;
    height: 19px;
    padding-left: 7px;
    background-color: #fff;
    font-size: 11px;
    line-height: 19px;
}

.menu a {
    color: #111;
    text-decoration: none;
}

/* command area */
.command {
    padding-left: 6px;
    border-top: 2px solid #eff0f1;
    background-color: #fff;
    font-size: 11px;
}

.history {
    display: flex;
    height: 29px;
    border-bottom: 1px solid #c2c5c9;
}

.history-lines {
    display: flex;
    flex: 1;
    flex-direction: column;
    justify-content: flex-end;
    overflow: hidden;
}

.history p {
    margin: 0;
    flex-shrink: 0;
    line-height: 19px;
}

.history-scroll {
    display: flex;
    flex-direction: column;
    justify-content: space-around;
    align-items: center;
    width: 14px;
    background-color: #f1f2f4;
}

.history-scroll svg,
.scrollbar svg {
    width: 8px;
    height: 6px;
    fill: none;
    stroke: #333;
    stroke-width: 2;
}

.prompt {
    display: flex;
    align-items: center;
    height: 19px;
}

.prompt label {
    font-weight: bold;
}

.prompt input {
    flex: 1;
}

.spin {
    width: 14px;
}

.spin button {
    display: flex;
    align-items: center;
    justify-content: center;
    width: 13px;
    height: 8px;
    border: 1px solid #999;
    background-color: #f4f4f4;
}

.spin svg {
    width: 5px;
    height: 3px;
}

/* toolbar tabs */
.tabs {
    display: flex;
    height: 32px;
    padding: 6px 0 0 7px;
    border-bottom: 1px solid #cfd4dc;
}

.tab {
    padding: 0 16px;
    margin-right: 1px;
    white-space: nowrap;
    background: linear-gradient(290deg, #e2e3e6 0, #d9dadc 18px);
    clip-path: polygon(0 3px, 3px 0, calc(100% - 4px) 0, 100% 6px, 100% 100%, 0 100%);
}

.tab.active {
    background: #eef1f8;
}

.tabs-cog {
    width: 14px;
    height: 14px;
    margin: 5px 0 0 auto;
    stroke: #777;
}

.toolbar {
    display: flex;
    height: 32px;
    padding: 2px 0 0 6px;
}

.tool {
    display: flex;
    align-items: center;
    justify-content: center;
    position: relative;
    width: 25px;
    height: 25px;
}

.tool svg {
    width: 20px;
    height: 20px;
    fill: none;
}

.tool.more::after {
    content: "";
    position: absolute;
    right: 0;
    bottom: 1px;
    border-bottom: 5px solid #6f7278;
    border-left: 5px solid transparent;
}

/* main area */
.workspace {
    display: flex;
    flex: 1;
    min-height: 0;
}

.sidebar {
    display: grid;
    grid-template-columns: 25px 25px;
    align-content: start;
    width: 58px;
    margin-top: 6px;
    padding: 2px 0 0 1px;
    border-top: 1px solid #d3d7df;
}

.views {
    display: flex;
    flex: 1;
    flex-direction: column;
    min-width: 0;
}

.viewport-grid {
    display: grid;
    flex: 1;
    grid-template-columns: 1fr 1fr;
    grid-template-rows: 1fr 1fr;
    gap: 2px;
    min-height: 0;
    margin-top: 3px;
    background-color: #eceff5;
}

.viewport {
    position: relative;
    overflow: hidden;
    background-color: #a0a4ad;
}

.scene {
    position: absolute;
    inset: 0;
    width: 100%;
    height: 100%;
}

.axis {
    fill: none;
    stroke: #757985;
}

.axis text {
    fill: #757985;
    stroke: none;
    font-size: 12px;
}

.viewport-title {
    display: flex;
    position: absolute;
    top: 0;
    left: 0;
    height: 18px;
    background-color: #c5c8ce;
    border-radius: 0 0 3px 0;
    color: #454950;
    font-weight: bold;
    line-height: 18px;
}

.viewport-title button {
    padding: 0 6px;
}

.viewport-title button + button {
    display: flex;
    align-items: center;
    padding: 0 3px;
    margin: 2px 0;
    border-left: 1px solid #555;
}

.viewport-title svg {
    width: 6px;
    height: 4px;
}

.viewport.current .viewport-title {
    color: #000;
    background-color: #839db8;
}

.view-tabs {
    display: flex;
    height: 22px;
}

.view-tabs button {
    height: 21px;
    padding: 0 8px;
    color: #333;
    background-color: #d9dadd;
    border-radius: 0 0 6px 10px;
}

.view-tabs .active,
.view-tabs .add {
    background-color: #f0f2f7;
}

.view-tabs .add {
    display: flex;
    align-items: center;
    padding: 0 8px;
    border-right: 1px solid #cfd3d9;
    border-bottom: 1px solid #cfd3d9;
    border-radius: 0;
}

.view-tabs svg {
    width: 9px;
    height: 9px;
    fill: #fff;
    stroke: #777;
}

/* properties panel */
.panel {
    display: flex;
    flex-direction: column;
    width: 171px;
    margin: 8px 0 0 8px;
    border: 1px solid #cdd2da;
    border-right: none;
    background-color: #f7f8fb;
}

.panel-tabs {
    display: flex;
    height: 26px;
    background-color: #e8ebf1;
}

.panel-tabs button {
    display: flex;
    align-items: center;
    justify-content: center;
    width: 24px;
    background-color: #d9dadd;
    clip-path: polygon(0 4px, 4px 0, calc(100% - 5px) 0, 100% 8px, 100% 100%, 0 100%);
}

.panel-tabs .active {
    width: 22px;
    background-color: #f7f8fb;
}

.panel-tabs button svg {
    width: 16px;
    height: 16px;
}

.panel-cog {
    width: 13px;
    height: 13px;
    margin: 11px 1px 0 auto;
    stroke: #aaa;
}

.panel-modes {
    display: flex;
    gap: 4px;
    padding: 3px;
}

.panel-modes button {
    display: flex;
    align-items: center;
    justify-content: center;
    width: 23px;
    height: 23px;
    border: 1px solid #555;
    background-color: #b5b9bf;
}

.panel-modes .active {
    border-color: #2c6d9c;
    background-color: #9ecbea;
}

.panel-modes svg {
    width: 20px;
    height: 20px;
}

.properties {
    display: flex;
    flex: 1;
    gap: 5px;
    min-height: 0;
    margin: 3px 3px 4px;
}

.properties table {
    flex: 1;
    height: 100%;
    table-layout: fixed;
    border-collapse: collapse;
    border-top: 1px solid #e2e4e8;
}

.properties tr {
    height: 22px;
    background-color: #fff;
}

.properties th,
.properties td {
    padding: 0;
    border-bottom: 1px solid #e6e8ec;
    text-align: left;
    font-weight: normal;
    line-height: 16px;
    white-space: nowrap;
}

.properties th {
    width: 72px;
    padding-left: 19px;
    border-right: 1px solid #e6e8ec;
}

.properties .group {
    height: 27px;
    background-color: #f7f8fb;
}

.properties .group th {
    padding-left: 3px;
    border-right: none;
    font-size: 13px;
}

.properties td input {
    display: block;
    width: 100%;
    height: 18px;
    padding-left: 4px;
}

.properties .off {
    color: #85888c;
}

.off td,
.readonly td {
    background-color: #eceef1;
}

.select {
    display: flex;
}

.select select {
    flex: 1;
    min-width: 0;
    height: 20px;
    padding-left: 3px;
    appearance: none;
}

.select span {
    display: flex;
    align-items: center;
    justify-content: center;
    width: 21px;
    border: 1px solid #b5b7ba;
    background-color: #e6e6e7;
}

.select svg {
    width: 8px;
    height: 6px;
    fill: none;
    stroke: #444;
}

.properties td button {
    display: block;
    width: 100%;
    height: 20px;
    border: 1px solid #9a9c9f;
    background-color: #e2e2e3;
}

.scrollbar {
    display: flex;
    flex-direction: column;
    align-items: center;
    justify-content: space-between;
    width: 13px;
    padding: 4px 0;
    background-color: #f1f2f4;
}

.thumb {
    width: 13px;
    height: 74%;
    margin: 5px 0 auto;
    background-color: #cbccce;
}

/* object snaps and status bar */
.osnap {
    display: flex;
    gap: 8px;
    height: 13px;
    margin-top: 8px;
    padding-left: 8px;
    overflow: hidden;
    font-size: 11px;
}

.osnap label {
    display: flex;
    align-items: center;
    gap: 3px;
    height: 18px;
    flex-shrink: 0;
    white-space: nowrap;
}

.osnap .wide {
    margin-right: 11px;
}

.osnap input {
    appearance: none;
    width: 11px;
    height: 11px;
    border: 1px solid #333;
    background-color: #fff;
}

.osnap input:disabled {
    border-color: #bbb;
    background-color: #e6e7ea;
}

.status {
    display: flex;
    height: 17px;
    margin-top: 4px;
    border-top: 1px solid #c5cad2;
    font-size: 11px;
    line-height: 16px;
    white-space: nowrap;
}

.status span,
.status button {
    padding: 0 5px;
    border-right: 1px solid #c9cdd4;
    text-align: center;
}

.status .coord {
    width: 79px;
}

.status .layer {
    display: flex;
    align-items: center;
    gap: 2px;
    flex: 1;
    padding-left: 1px;
}

.layer i {
    width: 12px;
    height: 12px;
    background-color: #000;
}

.status .on {
    font-weight: bold;
}

.status .tolerance {
    width: 260px;
    padding-left: 2px;
    border-right: none;
    text-align: left;
}

/* overlay mark */
.watermark {
    position: absolute;
    right: -1px;
    bottom: -1px;
    width: 190px;
    height: 141px;
    overflow: visible;
    pointer-events: none;
    font-family: "Open Sans", "Noto Sans CJK SC", sans-serif;
}

.mark-ghost {
    font-size: 38px;
    font-weight: bold;
    fill: #fff;
    fill-opacity: .6;
    stroke: #d3d6db;
    stroke-width: 1;
}

.mark-big,
.mark-com {
    fill: #3d78e0;
    font-weight: bold;
    font-style: italic;
}

.mark-big {
    font-size: 57px;
}

.mark-com {
    font-size: 37px;
}

.mark-cjk {
    fill: #3d78e0;
    font-size: 25px;
    font-weight: 500;
}
```

FILE: script.js
```javascript
// construction plane grid of the perspective viewport
const corners = [[675, 292.5], [776, 244], [850, 314.5], [741, 380]];
const steps = 28;

function mix(a, b, t) {
    return [a[0] + (b[0] - a[0]) * t, a[1] + (b[1] - a[1]) * t];
}

let d = '';
for (let i = 0; i <= steps; i++) {
    const t = i / steps;
    d += `M${mix(corners[0], corners[1], t)}L${mix(corners[3], corners[2], t)}`;
    d += `M${mix(corners[0], corners[3], t)}L${mix(corners[1], corners[2], t)}`;
}
document.getElementById('perspGrid').setAttribute('d', d);
```
